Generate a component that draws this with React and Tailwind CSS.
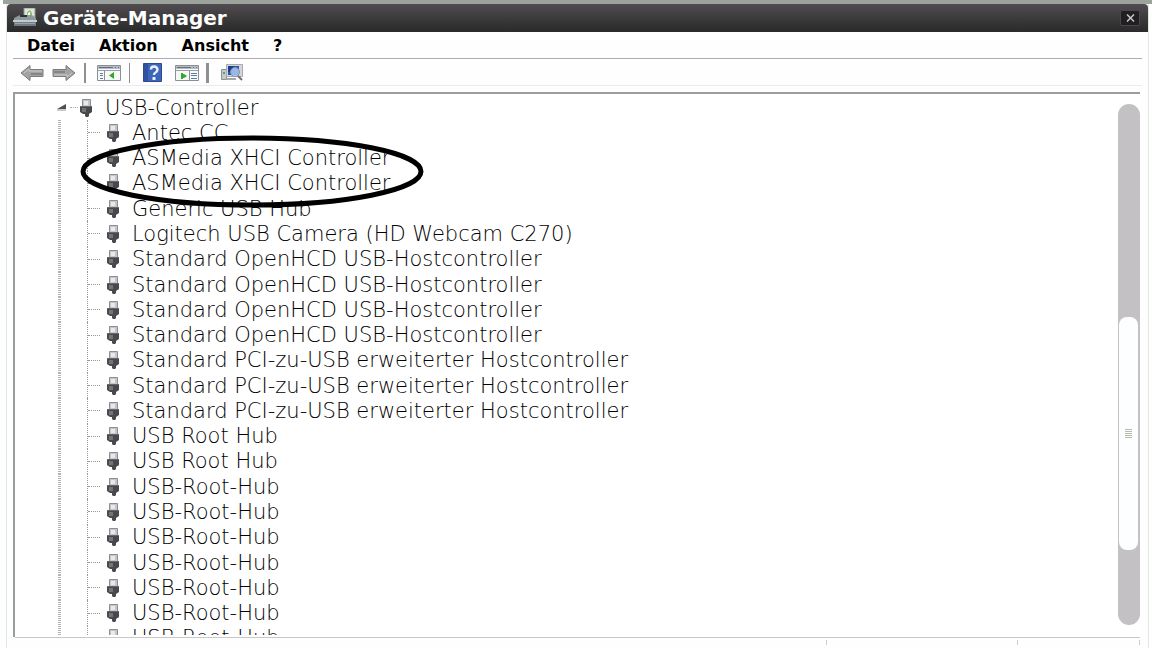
import React from "react";

const devices = [
  "Antec CC",
  "ASMedia XHCI Controller",
  "ASMedia XHCI Controller",
  "Generic USB Hub",
  "Logitech USB Camera (HD Webcam C270)",
  "Standard OpenHCD USB-Hostcontroller",
  "Standard OpenHCD USB-Hostcontroller",
  "Standard OpenHCD USB-Hostcontroller",
  "Standard OpenHCD USB-Hostcontroller",
  "Standard PCI-zu-USB erweiterter Hostcontroller",
  "Standard PCI-zu-USB erweiterter Hostcontroller",
  "Standard PCI-zu-USB erweiterter Hostcontroller",
  "USB Root Hub",
  "USB Root Hub",
  "USB-Root-Hub",
  "USB-Root-Hub",
  "USB-Root-Hub",
  "USB-Root-Hub",
  "USB-Root-Hub",
  "USB-Root-Hub",
  "USB-Root-Hub",
];

function UsbIcon() {
  return (
    <svg aria-hidden="true" className="h-[18px] w-3 shrink-0" viewBox="0 0 12 18">
      <path d="M2.500.5h8v8h-8z" fill="#c3c7ca" stroke="#8b8f92" />
      <path d="M4 2h4v4H4z" fill="#e6eaec" />
      <path d="M0 7h12v6l-3 2v2l-1 1H6l-1-1v-2H3l-3-2z" fill="#48484d" />
      <path d="M2 9h4v4H2z" fill="#737378" />
      <path d="M0 7h12v1H0z" fill="#67676c" />
    </svg>
  );
}

function DeviceManagerIcon() {
  return (
    <svg aria-hidden="true" className="h-5 w-6 shrink-0" viewBox="0 0 24 20">
      <path d="M11 0h11v11H11z" fill="#dfe6dc" stroke="#8f978d" />
      <path d="M14 8V4l3-2 2 3v3z" fill="#8cbf72" />
      <path d="M15 8V5l2-1v4z" fill="#f7fbf5" />
      <path d="M3 9l4-2h12l4 3v4H1v-4z" fill="#8d989e" />
      <path d="M7 7h7v2H7z" fill="#2b3033" />
      <path d="M0 12h24v2H0z" fill="#c2cbd0" />
      <path d="M1 14h22v4H1z" fill="#717c82" />
      <path d="M2 15h20v1H2z" fill="#9aa4a9" />
    </svg>
  );
}

function Arrow({ left }) {
  return (
    <svg aria-hidden="true" className={left ? "h-4 w-6" : "h-4 w-6 rotate-180"} viewBox="0 0 24 16">
      <path d="M1 8l9-7.500v4h13v7H10v4z" fill="#a3a3a3" stroke="#7b7b7b" />
      <path d="M4 8l5-4v2h13" fill="none" stroke="#cacaca" />
      <path d="M11 8h11v2H11z" fill="#858585" />
    </svg>
  );
}

function PaneIcon({ flipped }) {
  return (
    <svg aria-hidden="true" className="h-4 w-6" viewBox="0 0 24 16">
      <path d="M.5.5h23v15H.5z" fill="#f7f8f8" stroke="#8a9095" />
      <path d="M1 1h22v3H1z" fill="#b5bcc3" />
      <path d="M2 2h14v1H2zM18 2h1v1h-1zM21 2h1v1h-1z" fill="#66717d" />
      <path d="M1 5.500h22" stroke="#9aa0a5" />
      {flipped ? (
        <g>
          <path d="M14.500 6v9" stroke="#8a9095" />
          <path d="M6 8h2v1h1l3 2-3 2H8v1H6z" fill="#36a62c" />
          <path d="M16 8.500h6M16 10.500h6M16 13.500h6" stroke="#5b7ea6" />
        </g>
      ) : (
        <g>
          <path d="M7.500 6v9" stroke="#8a9095" />
          <path d="M17 7v7l-5-3.500z" fill="#36a62c" />
          <path d="M3 8.500h3M3 10.500h3M3 13.500h3" stroke="#5b7ea6" />
        </g>
      )}
    </svg>
  );
}

function HelpIcon() {
  return (
    <svg aria-hidden="true" className="h-5 w-5" viewBox="0 0 20 20">
      <path d="M.5.5h18v18H.5z" fill="#3e66b8" stroke="#2c4b91" />
      <path d="M1 1h4v17H1z" fill="#2f52a2" />
      <path d="M8 6.500Q8 3.500 11 3.500T14.500 6.500Q14.500 8.500 12.500 9.500Q11 10.200 11 12" fill="none" stroke="#e9eef8" strokeWidth="2.400" />
      <path d="M9.500 14h3v3h-3z" fill="#e9eef8" />
    </svg>
  );
}

function ScanIcon() {
  return (
    <svg aria-hidden="true" className="h-[18px] w-[22px]" viewBox="0 0 22 18">
      <path d="M.5 5.500h5v10h-5z" fill="#c5c9c8" stroke="#8c9290" />
      <path d="M2 8h2v2H2z" fill="#57a951" />
      <path d="M5.500.5h16v12h-16z" fill="#d2d6da" stroke="#a6acb2" />
      <path d="M7 2h11v9H7z" fill="#2856b5" />
      <path d="M7 2h7l-5 6H7z" fill="#1a3c92" />
      <circle cx="14" cy="8" r="4.500" fill="#b4d1f4" fillOpacity=".8" stroke="#8492a4" />
      <path d="M17 12l4 4" stroke="#77716e" strokeWidth="2" />
      <path d="M6 15h9" stroke="#a5aaa9" strokeWidth="2" />
    </svg>
  );
}

const toolButton = "flex h-6 items-center justify-center";

export default function App() {
  return (
    <div className="flex h-screen flex-col overflow-hidden bg-[#fefefe] font-['DejaVu_Sans',sans-serif] text-black">
      <div className="ml-[3px] h-1 shrink-0 bg-[#9ca39c]" />
      <main className="mr-[3px] ml-[6px] flex min-h-0 flex-1 flex-col border-x border-[#dfe9df]">
        <header className="flex h-7 shrink-0 items-center rounded-t-sm bg-linear-to-b from-[#514c51] to-[#292a29] pr-2 pl-[6px]">
          <DeviceManagerIcon />
          <h1 className="ml-[6px] flex-1 text-[20px] leading-7 font-bold text-white">Geräte-Manager</h1>
          <button type="button" aria-label="Schließen" className="flex h-4 w-5 items-center justify-center rounded-xs border border-[#4c454c] bg-[#211f21]">
            <svg aria-hidden="true" className="h-2 w-[9px]" viewBox="0 0 9 8">
              <path d="M1 .5l7 7M8 .5l-7 7" stroke="#c8c8c8" strokeWidth="1.500" />
            </svg>
          </button>
        </header>

        <nav aria-label="Menü" className="mr-[6px] ml-[6px] flex h-[27px] shrink-0 items-center gap-6 border-b border-[#b3a9b3] pt-[2px] pl-[14px] text-base leading-6 font-bold">
          <button type="button">Datei</button>
          <button type="button">Aktion</button>
          <button type="button">Ansicht</button>
          <button type="button">?</button>
        </nav>

        <div role="toolbar" aria-label="Symbolleiste" className="mx-[6px] flex h-[27px] shrink-0 items-center border-b border-[#ececec] pt-[2px] pl-[7px]">
          <button type="button" aria-label="Zurück" className={toolButton}><Arrow left /></button>
          <button type="button" aria-label="Vorwärts" className={toolButton + " ml-2"}><Arrow /></button>
          <span className="ml-2 h-5 w-[2px] bg-[#909090]" />
          <button type="button" aria-label="Konsolenstruktur" className={toolButton + " ml-[11px]"}><PaneIcon /></button>
          <span className="ml-2 h-5 w-px bg-[#909090]" />
          <button type="button" aria-label="Hilfe" className={toolButton + " ml-[13px]"}><HelpIcon /></button>
          <button type="button" aria-label="Aktionsbereich" className={toolButton + " ml-3"}><PaneIcon flipped /></button>
          <span className="ml-[7px] h-5 w-[3px] bg-[#909090]" />
          <button type="button" aria-label="Nach geänderter Hardware suchen" className={toolButton + " ml-3"}><ScanIcon /></button>
        </div>

        <section className="mt-[6px] mr-2 ml-[6px] flex min-h-0 flex-1 border-t-2 border-l-2 border-[#9a9e99] bg-white">
          <div className="relative mb-[2px] min-w-0 flex-1 overflow-hidden">
            <ul id="tree" role="tree" aria-label="Geräte" className="mt-px grid h-[556px] auto-rows-fr text-[21px] leading-6 font-extralight whitespace-nowrap">
              <li role="treeitem" aria-expanded="true" className="flex min-h-0 items-center">
                <span className="ml-[42px] flex w-[21px] items-center">
                  <svg aria-hidden="true" className="h-[7px] w-[9px]" viewBox="0 0 9 7">
                    <path d="M9 0v5H0z" fill="#4c514c" />
                    <path d="M0 5h9v2H0z" fill="#c9cdc9" />
                  </svg>
                  <span className="ml-1 flex-1 border-t border-dotted border-[#aaa]" />
                </span>
                <span className="ml-[2px] flex"><UsbIcon /></span>
                <span className="ml-[13px]">USB-Controller</span>
              </li>
              {devices.map((name, i) => (
                <li key={i} role="treeitem" className="flex min-h-0 items-center">
                  <span className="ml-[43px] w-[3px] self-stretch bg-[repeating-linear-gradient(to_bottom,#b4b4b4_0px,#b4b4b4_1px,#ffffff_1px,#ffffff_2px)]" />
                  <span className="ml-[26px] flex w-4 items-center self-stretch border-l border-dotted border-[#999]">
                    <span className="w-3 border-t border-dotted border-[#999]" />
                  </span>
                  <span className="ml-1 flex"><UsbIcon /></span>
                  <span className="ml-[13px]">{name}</span>
                </li>
              ))}
            </ul>
            <svg aria-hidden="true" className="pointer-events-none absolute top-[41px] left-[65px] h-[73px] w-[344px]" viewBox="0 0 344 73">
              <ellipse cx="172" cy="36.500" rx="169" ry="33.500" fill="none" stroke="#000" strokeWidth="5" />
            </svg>
          </div>
          <div role="scrollbar" aria-label="Bildlauf" aria-controls="tree" aria-valuenow="70" className="mt-[10px] mb-3 flex w-[22px] shrink-0 flex-col rounded-full bg-[#c3c1c3] pr-[2px] pl-px">
            <div className="flex-[213]" />
            <div className="flex flex-[233] items-center justify-center rounded-lg bg-[#fdfeff]">
              <svg aria-hidden="true" className="h-[9px] w-[7px]" viewBox="0 0 7 9">
                <path d="M0 .5h7M0 2.500h7M0 4.500h7M0 6.500h7M0 8.500h7" stroke="#b9b9a9" />
              </svg>
            </div>
            <div className="flex-[75]" />
          </div>
        </section>

        <footer className="mr-2 ml-[8px] flex h-[11px] shrink-0 items-start border-t border-[#c6cac6] pt-[2px]">
          <span className="h-[5px] flex-1 border-r border-[#ccc]" />
          <span className="h-[5px] w-[191px] border-r border-[#ccc]" />
          <span className="h-[5px] w-[122px] border-r border-[#ccc]" />
        </footer>
      </main>
    </div>
  );
}
